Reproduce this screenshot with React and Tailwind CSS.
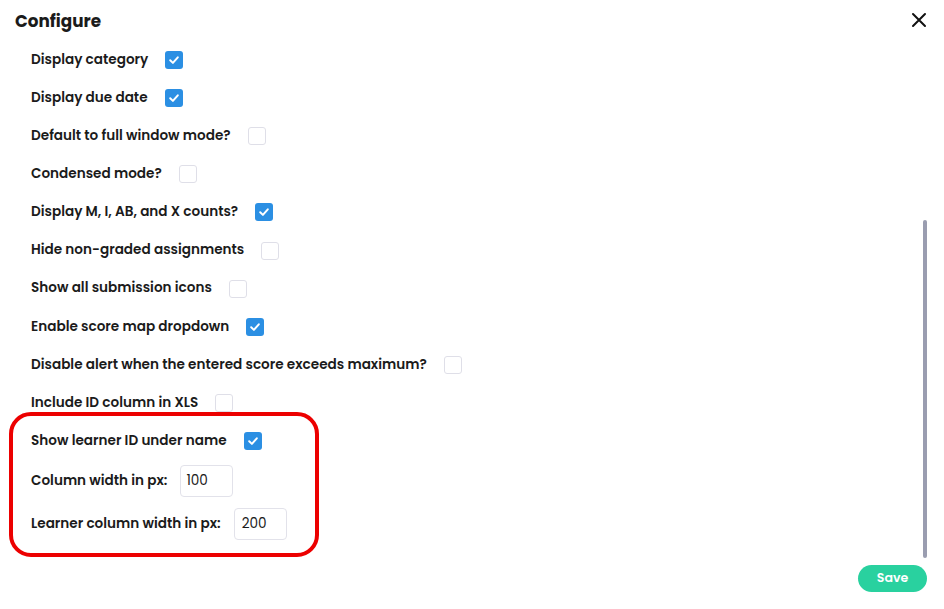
import React from "react";

const rows = [
  ["Display category", true],
  ["Display due date", true],
  ["Default to full window mode?", false],
  ["Condensed mode?", false],
  ["Display M, I, AB, and X counts?", true],
  ["Hide non-graded assignments", false],
  ["Show all submission icons", false],
  ["Enable score map dropdown", true],
  ["Disable alert when the entered score exceeds maximum?", false],
  ["Include ID column in XLS", false],
  ["Show learner ID under name", true],
];

function Box({ checked }) {
  if (checked) {
    return (
      <span className="flex h-[18px] w-[18px] items-center justify-center rounded-[3px] bg-[#2b8fe3]">
        <svg width="12" height="12" viewBox="0 0 12 12" fill="none">
          <path d="M2.2 6.3 L4.9 8.9 L9.8 3.3" stroke="white" strokeWidth="2" strokeLinecap="round" strokeLinejoin="round" />
        </svg>
      </span>
    );
  }
  return <span className="block h-[18px] w-[18px] rounded-[3px] border border-[#dfdfe8] bg-white" />;
}

export default function App() {
  return (
    <div className="relative h-[609px] w-[944px] overflow-hidden bg-white text-[#1b1b1b]" style={{ fontFamily: "Poppins, 'Noto Sans', 'Open Sans', sans-serif" }}>
      <div className="flex h-[40px] items-center justify-between pl-[15px] pr-[17px]">
        <h1 className="pt-[4px] text-[16.8px] font-bold">Configure</h1>
        <svg width="16" height="16" viewBox="0 0 16 16">
          <path d="M2 2 L14 14 M14 2 L2 14" stroke="#111" strokeWidth="2" strokeLinecap="round" />
        </svg>
      </div>
      <div className="flex flex-col pl-[31px] pt-[1px]">
        {rows.map(([label, checked]) => (
          <div key={label} className="flex h-[38.1px] items-center gap-[17px]">
            <span className="text-[13.6px] font-semibold">{label}</span>
            <Box checked={checked} />
          </div>
        ))}
        <div className="flex flex-col gap-[11px] pt-[5px]">
          <div className="flex items-center gap-[13px]">
            <span className="text-[13.6px] font-semibold">Column width in px:</span>
            <div className="flex h-[32px] w-[53px] items-center rounded-[4px] border border-[#e2e2ea] pl-[5px] text-[13.6px]">100</div>
          </div>
          <div className="flex items-center gap-[13px]">
            <span className="text-[13.6px] font-semibold">Learner column width in px:</span>
            <div className="flex h-[32px] w-[53px] items-center rounded-[4px] border border-[#e2e2ea] pl-[7px] text-[13.6px]">200</div>
          </div>
        </div>
      </div>
      <div className="flex justify-end pr-[17px] pt-[25px]">
        <button className="h-[27px] w-[69px] rounded-full bg-[#29d19f] text-[12.6px] font-semibold text-white">Save</button>
      </div>
      <div className="absolute left-[923px] top-[220px] h-[338px] w-[4px] rounded-full bg-[#9a9db0]" />
      <div className="pointer-events-none absolute left-[9px] top-[412px] h-[145px] w-[310px] rounded-[22px] border-[4px] border-[#ec0000]" />
    </div>
  );
}
